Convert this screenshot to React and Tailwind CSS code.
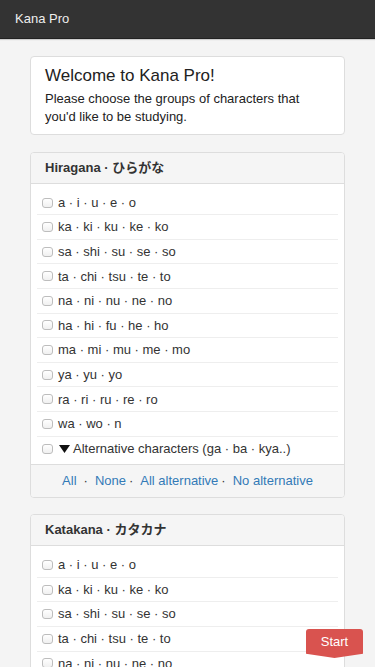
import React from 'react';

// Rows for each kana table
const rows = [
  'a · i · u · e · o',
  'ka · ki · ku · ke · ko',
  'sa · shi · su · se · so',
  'ta · chi · tsu · te · to',
  'na · ni · nu · ne · no',
  'ha · hi · fu · he · ho',
  'ma · mi · mu · me · mo',
  'ya · yu · yo',
  'ra · ri · ru · re · ro',
  'wa · wo · n',
];

const Checkbox = () => (
  <span className="w-[11px] h-[10px] shrink-0 rounded-[3px] border border-[#bdbdbd] bg-gradient-to-b from-white to-[#f0f0f0]" />
);

const KanaPanel = ({ title, kana, first }) => (
  <div className={first ? 'mt-[17px] rounded-[4px] border border-[#dddddd] bg-white overflow-hidden' : 'mt-[16px] rounded-[4px] border border-[#dddddd] bg-white overflow-hidden'}>
    {/* Panel header */}
    <div className="h-[31px] flex items-center px-[14px] bg-[#f5f5f5] border-b border-[#dddddd] font-bold text-[13px] text-[#333]">
      {title} · {kana}
    </div>

    {/* Row list */}
    <div className="px-[6px] pt-[7px] pb-[3px]">
      {rows.map((row) => (
        <div key={row} className="h-[24.6px] flex items-center gap-[5px] pl-[5px] border-b border-[#eeeeee] text-[13px] text-[#333]">
          <Checkbox />
          <span>{row}</span>
        </div>
      ))}
      <div className="h-[24.6px] flex items-center pl-[5px] text-[13px] text-[#333]">
        <Checkbox />
        {/* down triangle */}
        <svg className="ml-[6px] mr-[3px] shrink-0" width="11" height="8" viewBox="0 0 11 8">
          <polygon points="0,0 11,0 5.5,8" fill="#111" />
        </svg>
        <span>Alternative characters (ga · ba · kya..)</span>
      </div>
    </div>

    {/* Footer links */}
    <div className="h-[33px] flex items-center justify-center bg-[#f5f5f5] border-t border-[#dddddd] text-[13px] text-[#337ab7]">
      <a>All</a>
      <span className="mx-[7px] text-[#333]">·</span>
      <a>None</a>
      <span className="ml-[3px] mr-[7px] text-[#333]">·</span>
      <a>All alternative</a>
      <span className="ml-[3px] mr-[7px] text-[#333]">·</span>
      <a>No alternative</a>
    </div>
  </div>
);

export default function App() {
  return (
    <div className="min-h-screen bg-[#f4f4f4] font-['Liberation_Sans','Noto_Sans_CJK_JP',sans-serif] text-[#333]">
      {/* Navbar */}
      <div className="h-[39px] flex items-center px-[15px] bg-[#333333] border-b border-[#222] shadow-[0_1px_1px_rgba(0,0,0,0.15)] text-[13px] text-[#eeeeee]">
        Kana Pro
      </div>

      <div className="px-[30px] pt-[17px] pb-[60px]">
        {/* Welcome card */}
        <div className="rounded-[4px] border border-[#dddddd] bg-white px-[14px] pt-[10px] pb-[8px]">
          <h1 className="text-[17px] leading-[18.7px] text-[#222]">Welcome to Kana Pro!</h1>
          <p className="mt-[4px] text-[13px] leading-[18px] text-[#222]">
            Please choose the groups of characters that you'd like to be studying.
          </p>
        </div>

        <KanaPanel title="Hiragana" kana="ひらがな" first />
        <KanaPanel title="Katakana" kana="カタカナ" />
      </div>

      {/* Floating start button */}
      <button className="fixed right-[12px] bottom-[9px] w-[57px] h-[29px] pb-[4px] rounded-t-[3px] bg-[#d9534f] text-white text-[13px] [clip-path:polygon(0_0,100%_0,100%_85%,50%_100%,0_85%)]">
        Start
      </button>
    </div>
  );
}
